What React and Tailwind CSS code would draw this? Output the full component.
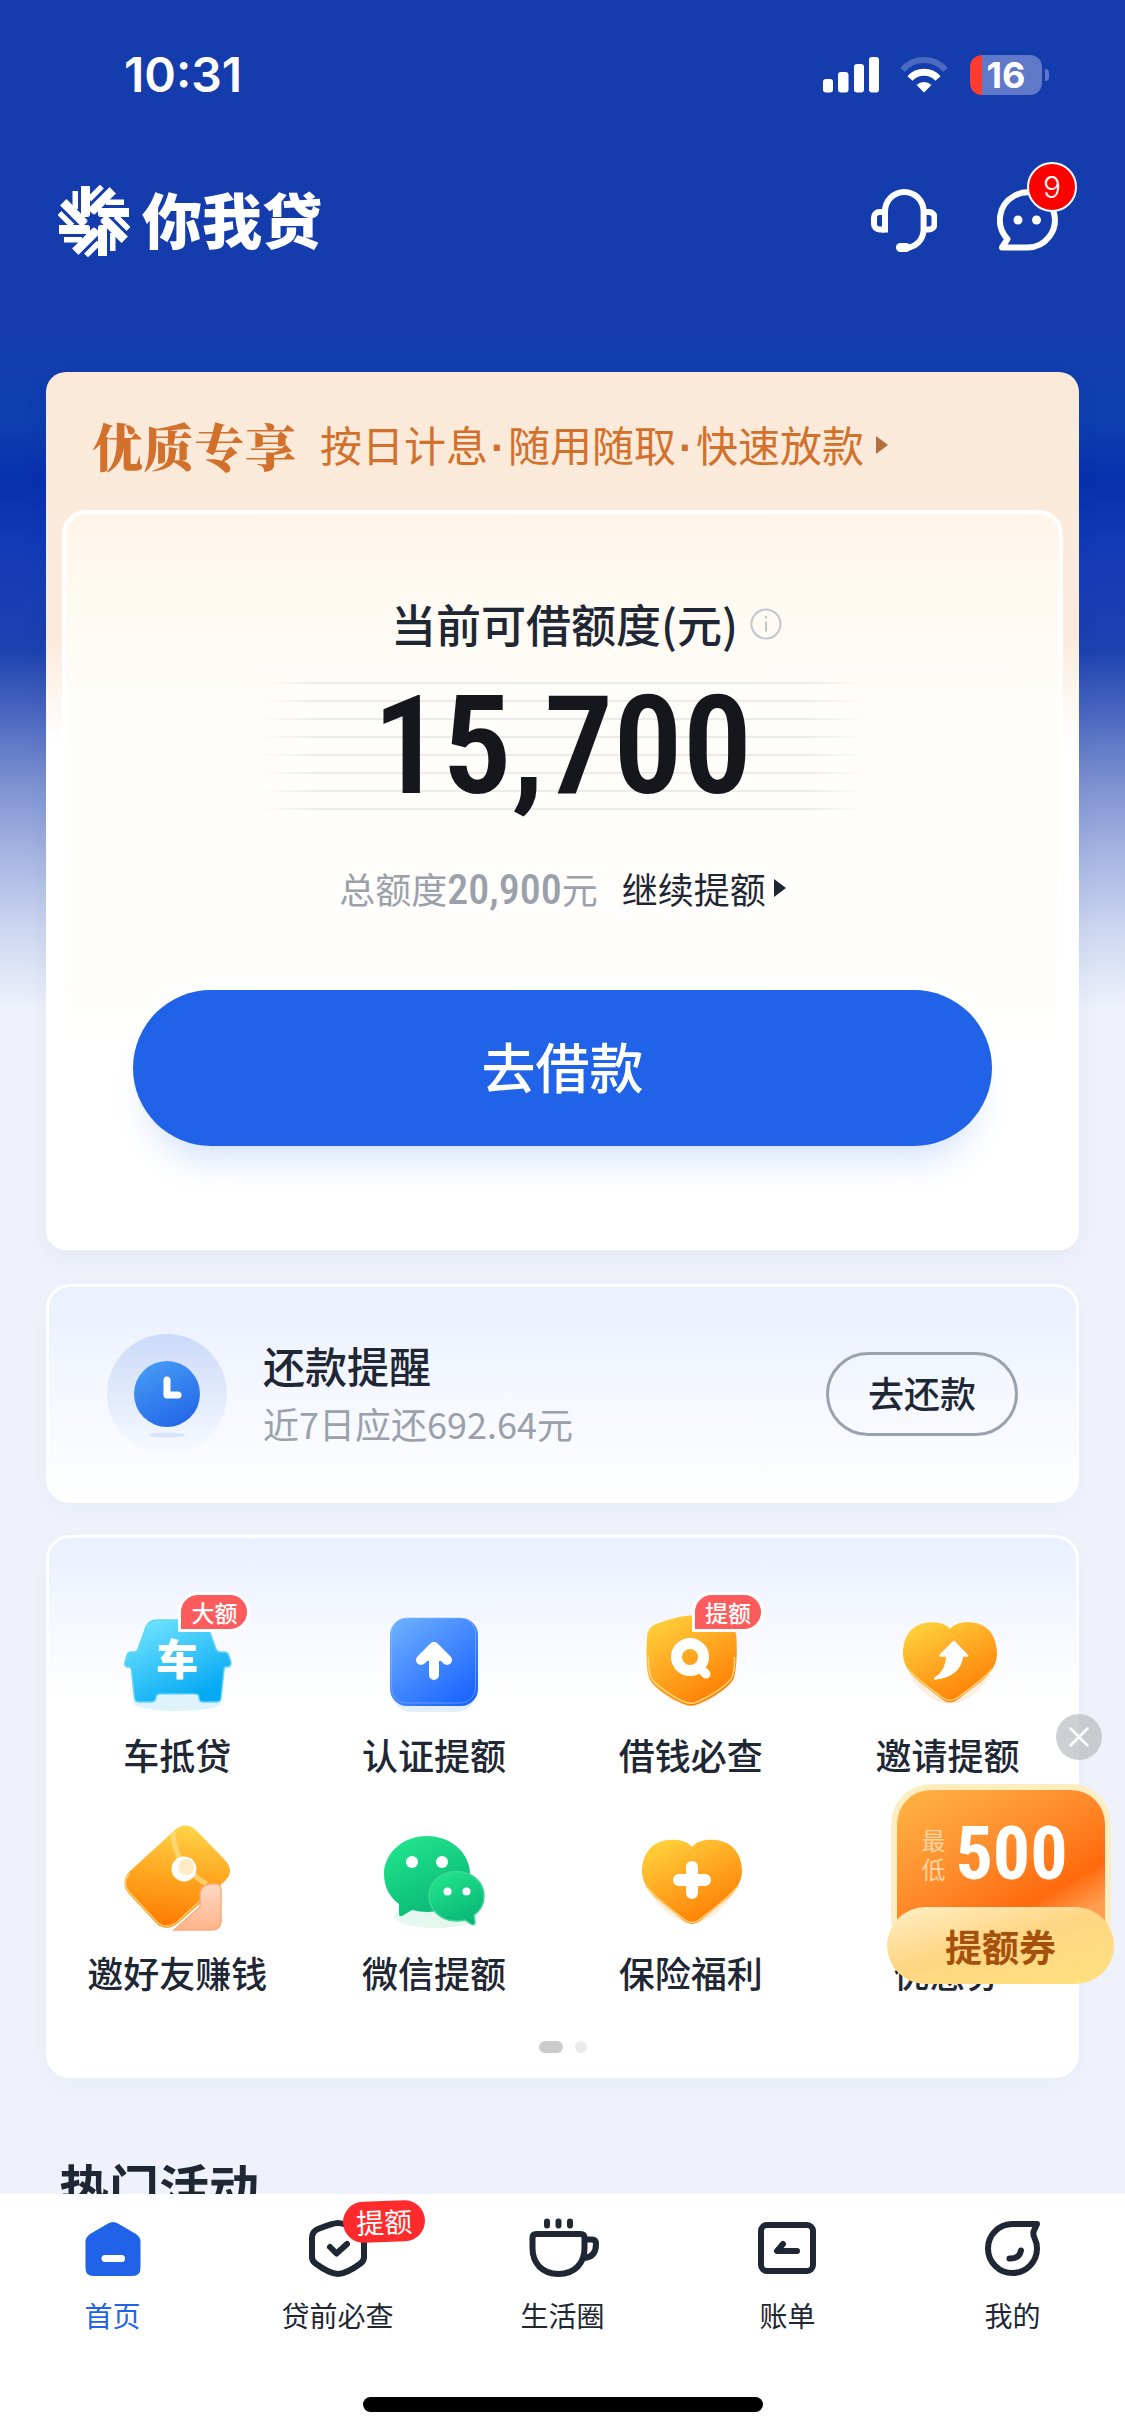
import React from "react";

const CarIcon = () => (
  <svg viewBox="0 0 120 120" className="size-[120px]" aria-hidden="true">
    <defs>
      <linearGradient id="car" x1="0" y1="0" x2="0.6" y2="1">
        <stop offset="0" stopColor="#7ae9ff" />
        <stop offset="1" stopColor="#05a9f4" />
      </linearGradient>
    </defs>
    <ellipse cx="60" cy="101" rx="44" ry="8" fill="#dff3fd" />
    <path
      d="M40 18 H80 Q88 18 91 25 L99 47 Q100 50 103 50 H107 Q111 50 112 54 L114 60 Q114 65 110 65 H108 Q107 66 107 68 L104 96 Q104 100 99 100 H86 Q82 100 82 96 Q82 92 78 92 H43 Q39 92 39 96 Q38 100 34 100 H22 Q18 100 17.500 96 L14.500 68 Q14 65 12 65 H10 Q7 64 8 60 L10 53 Q11 50 15 50 H18 Q20 50 21 47 L29 25 Q32 18 40 18Z"
      fill="url(#car)"
      stroke="#63d5fb"
      strokeWidth="1.500"
    />
    <text
      x="60"
      y="73"
      textAnchor="middle"
      className="fill-white font-['Noto_Sans_CJK_SC',sans-serif] text-[42px] font-black"
    >
      车
    </text>
  </svg>
);

const VerifyIcon = () => (
  <svg viewBox="0 0 120 120" className="size-[120px]" aria-hidden="true">
    <defs>
      <linearGradient id="verify" x1="0" y1="0" x2="0.8" y2="1">
        <stop offset="0" stopColor="#6fb2ff" />
        <stop offset="1" stopColor="#1c64ff" />
      </linearGradient>
    </defs>
    <rect x="18" y="28" width="84" height="82" rx="20" fill="#e3eefd" />
    <rect x="16" y="16" width="88" height="88" rx="17" fill="url(#verify)" />
    <rect x="17.500" y="16" width="84" height="85" rx="15" fill="none" stroke="#83b8ff" strokeOpacity="0.6" />
    <path
      d="M60 45 V73 M47 58 L60 45 L73 58 M54 54 H66"
      fill="none"
      stroke="#fff"
      strokeWidth="10"
      strokeLinecap="round"
      strokeLinejoin="round"
    />
  </svg>
);

const OrangeDefs = ({ id }) => (
  <defs>
    <linearGradient id={id} x1="0.100" y1="0" x2="0.700" y2="1">
      <stop offset="0" stopColor="#ffd43c" />
      <stop offset="0.550" stopColor="#ffa31f" />
      <stop offset="1" stopColor="#ff7c00" />
    </linearGradient>
  </defs>
);

const SearchShieldIcon = () => (
  <svg viewBox="0 0 120 120" className="size-[120px]" aria-hidden="true">
    <OrangeDefs id="shield" />
    <path d="M20 78 Q60 130 100 78Z" fill="#fdeedd" />
    <path
      d="M60 13.500 C73 14 85 18 95 21.500 Q105 25 105.500 35 C106 50 106 62 103.500 74 C102 84 80 97 66 102.500 Q60 105 54 102.500 C40 97 19 84 17.500 74 C15 62 15.500 50 16 35 Q16.500 25 26 21.500 C37 18 48 14 60 13.500Z"
      fill="url(#shield)"
    />
    <path
      d="M17.500 55 Q17 66 19.500 74 C22 82 42 95 54 100 Q60 102.500 66 100 C78 95 99 82 101.500 74 Q104 66 103.500 55"
      fill="none"
      stroke="#ffd479"
      strokeWidth="1.500"
    />
    <circle cx="59" cy="55" r="13.500" fill="none" stroke="#fff" strokeWidth="11" />
    <path d="M68 65 L75 72" stroke="#fff" strokeWidth="9" strokeLinecap="round" />
  </svg>
);

const HeartArrowIcon = () => (
  <svg viewBox="0 0 120 120" className="size-[120px]" aria-hidden="true">
    <OrangeDefs id="heartArrow" />
    <path d="M20 72 Q62 132 104 72Z" fill="#fdf0e2" />
    <path
      d="M62 27 C68 20 78 20 84 20.500 C100 22 109 34 109 52 C109 64 100 74 90 82 L69 98 Q62 103 55 98 L34 82 C24 74 15 64 15 52 C15 34 24 22 40 20.500 C46 20 56 20 62 27Z"
      fill="url(#heartArrow)"
    />
    <path d="M20 67 Q28 77 55 96 Q62 101 69 96 Q96 77 104 67" fill="none" stroke="#ffd479" strokeWidth="1.500" />
    <path
      d="M66 40 L79 53.500 H74 C73 66 64 75 47 76.500 C55 72 59 65 59.500 53.500 H52.500Z"
      fill="#fff"
      stroke="#fff"
      strokeWidth="2.500"
      strokeLinejoin="round"
    />
  </svg>
);

const EnvelopeIcon = () => (
  <svg viewBox="0 0 120 120" className="size-[120px]" aria-hidden="true">
    <defs>
      <linearGradient id="envelope" x1="0.500" y1="0" x2="0.400" y2="1">
        <stop offset="0" stopColor="#ffd447" />
        <stop offset="0.500" stopColor="#ffa51f" />
        <stop offset="1" stopColor="#ff7a00" />
      </linearGradient>
      <linearGradient id="letter" x1="0.500" y1="0" x2="0.500" y2="1">
        <stop offset="0" stopColor="#fdd8c4" />
        <stop offset="1" stopColor="#ffb58a" />
      </linearGradient>
    </defs>
    <path
      d="M58 10 Q68 1 79 10 L108 40 Q118 51 108 61 L61 103 Q50 112 40 104 L12 74 Q3 63 12 52Z"
      fill="url(#envelope)"
    />
    <path d="M13 53 Q4 63 13 73 L41 103 Q50 110 60 102 L83 81" fill="none" stroke="#ffcf6b" strokeWidth="1.500" />
    <path d="M56 12 Q57 34 69 47 T90 64" fill="none" stroke="#ffdf8e" strokeOpacity="0.700" strokeWidth="5" />
    <path
      d="M57 110 L83 87 V76 Q83 64 95 64 H98 Q104 64 104 70 V100 Q104 110 94 110Z"
      fill="url(#letter)"
      stroke="#ffa878"
      strokeWidth="1.500"
    />
    <circle cx="67" cy="49" r="12.500" fill="#fff" />
    <circle cx="69" cy="47" r="8" fill="#ffecc4" />
  </svg>
);

const WechatIcon = () => (
  <svg viewBox="0 0 120 120" className="size-[120px]" aria-hidden="true">
    <defs>
      <linearGradient id="wechat" x1="0.200" y1="0" x2="0.700" y2="1">
        <stop offset="0" stopColor="#22e58c" />
        <stop offset="1" stopColor="#08b575" />
      </linearGradient>
    </defs>
    <ellipse cx="62" cy="96" rx="42" ry="12" fill="#e4f8ef" />
    <path
      d="M53 16 C77 16 96 33 96 54 C96 76 77 92 53 92 Q46 92 38 90 L28 96 Q25 97 25 94 L25 84 C15 77 10 66 10 54 C10 33 29 16 53 16Z"
      fill="url(#wechat)"
    />
    <path
      d="M82.500 51.500 C98 51.500 110 62 110 76 C110 84 106 91 100 95 L101 103 Q100 106 97 104 L91 100 Q87 101 82.500 101 C67 101 55 90 55 76 C55 62 67 51.500 82.500 51.500Z"
      fill="url(#wechat)"
      stroke="#3fd799"
      strokeWidth="1.500"
    />
    <g fill="#fff">
      <circle cx="38" cy="42" r="6" />
      <circle cx="68" cy="42" r="6" />
      <circle cx="73.500" cy="71.500" r="4" />
      <circle cx="92.500" cy="71.500" r="4" />
    </g>
  </svg>
);

const HeartPlusIcon = () => (
  <svg viewBox="0 0 120 120" className="size-[120px]" aria-hidden="true">
    <OrangeDefs id="heartPlus" />
    <path d="M18 72 Q61 134 104 72Z" fill="#fdf0e2" />
    <path
      d="M61 27 C67 20 77 19.500 84 20 C101 21 111 34 111 51 C111 62 104 72 96 79 L69 101 Q61 107 53 101 L26 79 C18 72 11 62 11 51 C11 34 21 21 38 20 C45 19.500 55 20 61 27Z"
      fill="url(#heartPlus)"
    />
    <path d="M15 66 Q24 78 54 100 Q61 105 68 100 Q98 78 107 66" fill="none" stroke="#ffd479" strokeWidth="1.500" />
    <path d="M61 47 V73 M48 60 H74" stroke="#fff" strokeWidth="12" strokeLinecap="round" />
  </svg>
);

const TicketIcon = () => (
  <svg viewBox="0 0 120 120" className="size-[120px]" aria-hidden="true">
    <OrangeDefs id="ticket" />
    <rect x="24" y="30" width="76" height="60" rx="12" fill="url(#ticket)" />
  </svg>
);

const services = [
  { label: "车抵贷", icon: <CarIcon />, tag: "大额" },
  { label: "认证提额", icon: <VerifyIcon /> },
  { label: "借钱必查", icon: <SearchShieldIcon />, tag: "提额" },
  { label: "邀请提额", icon: <HeartArrowIcon /> },
  { label: "邀好友赚钱", icon: <EnvelopeIcon /> },
  { label: "微信提额", icon: <WechatIcon /> },
  { label: "保险福利", icon: <HeartPlusIcon /> },
  { label: "优惠券", icon: <TicketIcon /> },
];

const tabs = [
  {
    label: "首页",
    active: true,
    icon: (
      <>
        <path
          d="M31 10.500 Q36 7.500 41 10.500 L59 21 Q63.500 24 63.500 29 V55 Q63.500 63 55.500 63 H16.500 Q8.500 63 8.500 55 V29 Q8.500 24 13 21Z"
          fill="#2063e8"
          stroke="none"
        />
        <path d="M28 45.500 H44.500" stroke="#fff" strokeWidth="7" />
      </>
    ),
  },
  {
    label: "贷前必查",
    tag: "提额",
    icon: (
      <>
        <path d="M36 10 Q31 10 16 16 Q10 18.500 10 25 V44 Q10 48 13.500 50.500 Q28 61 36 61 Q44 61 58.500 50.500 Q62 48 62 44 V25 Q62 18.500 56 16 Q41 10 36 10Z" />
        <path d="M28 34 L34.500 40.500 L45 31" />
      </>
    ),
  },
  {
    label: "生活圈",
    icon: (
      <>
        <path d="M9.500 21 H53.500 Q57.500 21 57.500 25 V35 C57.500 50 48 61 31.500 61 C15 61 5.500 50 5.500 35 V25 Q5.500 21 9.500 21Z" />
        <path d="M58 26.500 H65 Q69 26.500 69 31 C69 40 65 44.500 57 45" />
        <path d="M20 8.500 V12.500 M31.500 8.500 V12.500 M43 8.500 V12.500" />
      </>
    ),
  },
  {
    label: "账单",
    icon: (
      <>
        <rect x="9" y="12" width="52" height="46" rx="6" />
        <path d="M31 31 L25 38 H45" />
      </>
    ),
  },
  {
    label: "我的",
    icon: (
      <>
        <path d="M35.500 11 H60 L57 17.500 Q55.500 21 57.500 25 Q60 30 60 35.500 A24.500 24.500 0 1 1 35.500 11Z" />
        <path d="M32.500 45.500 Q42 46 44 37.500" />
      </>
    ),
  },
];

const arms = [0, 45, 90, 135, 180, 225, 270, 315];

const StatusBar = () => (
  <div className="flex h-[150px] items-center justify-between pr-[76px] pl-[124px] text-white">
    <span className="font-['Inter',sans-serif] text-5xl font-semibold">10:31</span>
    <div className="flex items-center">
      <svg viewBox="0 0 57 36" className="h-9 w-[57px]" fill="#fff" aria-hidden="true">
        <rect x="0" y="22" width="10" height="13.500" rx="3" />
        <rect x="15" y="15" width="10.500" height="20.500" rx="3" />
        <rect x="31" y="7" width="10" height="28.500" rx="3" />
        <rect x="46" y="0" width="10" height="35.500" rx="3" />
      </svg>
      <svg viewBox="0 0 48 36" className="ml-5 h-9 w-12" fill="none" strokeWidth="6" aria-hidden="true">
        <path d="M2.500 13 A28 28 0 0 1 45.500 13" stroke="#4c69c0" />
        <path d="M10 21.500 A19 19 0 0 1 38 21.500" stroke="#fff" strokeWidth="7" />
        <path d="M16.500 28 A11 11 0 0 1 31.500 28 L24 35.500Z" fill="#fff" />
      </svg>
      <div className="ml-[22px] flex h-10 w-[72px] items-center justify-center rounded-xl bg-[linear-gradient(90deg,#ff3b30_12px,#5f79c8_12px)]">
        <span className="font-['Inter',sans-serif] text-4xl font-bold">16</span>
      </div>
      <div className="ml-[3px] h-3 w-1 rounded-r-full bg-[#5f79c8]" />
    </div>
  </div>
);

const Header = () => (
  <header className="flex h-[142px] items-center justify-between pr-[66px] pl-[58px] text-white">
    <a href="#home" className="flex items-center gap-3">
      <svg viewBox="-36 -36 72 72" className="size-[72px]" aria-hidden="true">
        {arms.map((a) => (
          <g key={a} transform={`rotate(${a})`} fill="#fff">
            <path d="M-13 -35 H-4 V-4 H-13Z" />
            <path d="M-21.500 -30 H-16 V-12 H-21.500Z" />
          </g>
        ))}
        {arms.map((a) => (
          <path key={a} transform={`rotate(${a})`} d="M-14.500 -36 V-20" stroke="#143cad" strokeWidth="2.600" />
        ))}
        {arms.map((a) => (
          <path key={a} transform={`rotate(${a})`} d="M0 -8 L3 0 H-3Z" fill="#143cad" />
        ))}
      </svg>
      <span className="pb-1.5 text-[60px] leading-none font-black">你我贷</span>
    </a>
    <div className="flex items-center gap-[60px]">
      <button type="button" aria-label="客服">
        <svg viewBox="0 0 66 64" className="h-16 w-[66px]" fill="none" stroke="#fff" strokeWidth="6" aria-hidden="true">
          <path d="M14 40.500 H8.500 a5.500 5.500 0 0 1 -5.500 -5.500 V28.500 a5.500 5.500 0 0 1 5.500 -5.500 H14" />
          <path d="M52.500 40.500 H58 a5.500 5.500 0 0 0 5.500 -5.500 V28.500 a5.500 5.500 0 0 0 -5.500 -5.500 H52.500" />
          <path d="M14 43.500 V22.500 a19.300 19.500 0 0 1 38.600 0 V40 C52.600 51 45 58 35 59" />
          <path d="M29.500 58.500 H35" strokeWidth="9" strokeLinecap="round" />
        </svg>
      </button>
      <button type="button" aria-label="消息" className="relative">
        <svg viewBox="0 0 62 64" className="h-16 w-[62px]" fill="none" stroke="#fff" strokeWidth="6" strokeLinejoin="round" aria-hidden="true">
          <path d="M5 58.500 L10.500 50 A27.500 27.500 0 1 1 30.500 58.500Z" />
          <circle cx="21" cy="31" r="4.500" fill="#fff" stroke="none" />
          <circle cx="39.500" cy="31" r="4.500" fill="#fff" stroke="none" />
        </svg>
        <span className="absolute -top-[27px] -right-[18px] flex size-[50px] items-center justify-center rounded-full border-2 border-white bg-[#fe0000] font-['Inter',sans-serif] text-3xl font-light">
          9
        </span>
      </button>
    </div>
  </header>
);

const Dot = () => <span className="mx-[3px] font-['Liberation_Sans',sans-serif] font-bold">·</span>;

const LoanCard = () => (
  <section className="mx-[46px] mt-20 rounded-[20px] bg-[linear-gradient(180deg,#fbe9d9_0px,#fcebdd_270px,#ffffff_371px)] shadow-[0_8px_24px_rgba(30,50,100,0.05)]">
    <a href="#offer" className="flex h-[138px] items-center pt-2 pl-[46px] text-[#d2712c]">
      <span className="font-['Noto_Serif_CJK_SC','Noto_Sans_CJK_SC',serif] text-[51px] font-black">优质专享</span>
      <span className="ml-6 text-[42px]">
        按日计息
        <Dot />
        随用随取
        <Dot />
        快速放款
      </span>
      <svg viewBox="0 0 12 18" className="ml-3 h-[18px] w-3" fill="#b5703f" aria-hidden="true">
        <path d="M0 0 L12 9 L0 18Z" />
      </svg>
    </a>
    <div className="mx-4 flex flex-col items-center rounded-t-3xl border-4 border-b-0 border-white bg-[linear-gradient(180deg,#fff5ea_0px,#fffaf2_90px,#fffdf9_180px,#fffefc_420px,#ffffff_560px)] px-[67px] pt-20 pb-[104px]">
      <div className="flex items-center gap-3 pl-12">
        <h2 className="text-[45px] leading-[60px] font-medium text-[#1e2733]">当前可借额度(元)</h2>
        <svg viewBox="0 0 32 32" className="size-8" fill="none" stroke="#c3c6cb" strokeWidth="2" aria-hidden="true">
          <circle cx="16" cy="16" r="14.500" />
          <path d="M16 13.500 V23.500 M16 8 V10.500" />
        </svg>
      </div>
      <div className="relative mt-7 flex h-32 w-[606px] items-center justify-center">
        <div className="absolute inset-0 flex flex-col justify-between mask-[linear-gradient(90deg,transparent,#000_10%,#000_90%,transparent)]">
          {arms.map((a) => (
            <span key={a} className="h-[2px] bg-[#ecebea]" />
          ))}
        </div>
        <strong className="relative font-['Roboto_Condensed','Liberation_Sans_Narrow','Roboto',sans-serif] text-[138px] leading-none font-semibold text-[#15171c]">
          15,700
        </strong>
      </div>
      <div className="mt-[54px] flex items-center text-4xl leading-[48px]">
        <span className="text-[#9aa1ab]">
          总额度
          <span className="font-['Roboto_Condensed','Liberation_Sans_Narrow','Roboto',sans-serif] text-[42px] leading-none font-medium">20,900</span>元
        </span>
        <a href="#raise" className="ml-6 flex items-center gap-2 text-[#1e2733]">
          继续提额
          <svg viewBox="0 0 12 18" className="h-[18px] w-3" fill="#1e2733" aria-hidden="true">
            <path d="M0 0 L12 9 L0 18Z" />
          </svg>
        </a>
      </div>
      <button
        type="button"
        className="mt-[78px] h-[156px] w-full rounded-full bg-[#2063e8] pb-1.5 text-[54px] font-medium text-white shadow-[0_28px_36px_-16px_rgba(32,99,232,0.2)]"
      >
        去借款
      </button>
    </div>
  </section>
);

const RepayCard = () => (
  <section className="mx-[46px] mt-[34px] flex h-[219px] items-center rounded-3xl border-[3px] border-white bg-linear-to-b from-[#eaf0ff] to-white pr-[58px] pl-[58px] shadow-[0_8px_24px_rgba(30,50,100,0.03)]">
    <svg viewBox="0 0 120 120" className="size-[120px]" aria-hidden="true">
      <defs>
        <linearGradient id="halo" x1="0" y1="0" x2="0" y2="1">
          <stop offset="0" stopColor="#cbdaf8" />
          <stop offset="1" stopColor="#f8faff" />
        </linearGradient>
        <linearGradient id="clock" x1="0.200" y1="0" x2="0.700" y2="1">
          <stop offset="0" stopColor="#459bf5" />
          <stop offset="1" stopColor="#2467e8" />
        </linearGradient>
      </defs>
      <circle cx="60" cy="60" r="60" fill="url(#halo)" />
      <ellipse cx="60" cy="101" rx="18" ry="2.500" fill="#d9e4fb" />
      <circle cx="60" cy="60" r="33" fill="url(#clock)" />
      <path d="M60 46 V61 H71" fill="none" stroke="#fff" strokeWidth="7" strokeLinecap="round" strokeLinejoin="round" />
    </svg>
    <div className="ml-9 flex-1">
      <h3 className="text-[42px] leading-[58px] font-medium text-[#1e2733]">还款提醒</h3>
      <p className="text-4xl leading-[58px] text-[#9aa1ab]">近7日应还692.64元</p>
    </div>
    <button type="button" className="h-[84px] w-48 rounded-full border-[3px] border-[#9aa2ae] pb-1 text-4xl font-medium text-[#1e2733]">
      去还款
    </button>
  </section>
);

const ServiceGrid = () => (
  <section className="mx-[46px] mt-8 rounded-3xl border-[3px] border-white bg-[linear-gradient(180deg,#eaf0ff_0px,#ffffff_160px)] pt-16 pb-[22px] shadow-[0_8px_24px_rgba(30,50,100,0.03)]">
    <div className="grid grid-cols-4 gap-y-[42px]">
      {services.map((s) => (
        <a key={s.label} href="#service" className="flex flex-col items-center gap-2">
          <span className="relative">
            {s.icon}
            {s.tag && (
              <span className="absolute -top-2.5 left-[61px] rounded-full rounded-bl-none border-[3px] border-white bg-[#fe5b5c] px-2.5 text-[23px] leading-[34px] font-medium whitespace-nowrap text-white">
                {s.tag}
              </span>
            )}
          </span>
          <span className="text-4xl leading-[48px] font-medium text-[#1e2733]">{s.label}</span>
        </a>
      ))}
    </div>
    <div className="mt-[45px] flex justify-center gap-3">
      <span className="h-3 w-6 rounded-full bg-[#cbcbcb]" />
      <span className="size-3 rounded-full bg-[#ebebeb]" />
    </div>
  </section>
);

const CouponFloat = () => (
  <aside className="absolute right-[11px] bottom-[451px] flex w-[227px] flex-col items-end">
    <button type="button" aria-label="关闭" className="mr-3 mb-6 rounded-full bg-[#b4b5b9]/65">
      <svg viewBox="0 0 46 46" className="size-[46px]" stroke="#fff" strokeWidth="2.500" strokeLinecap="round" aria-hidden="true">
        <path d="M14.500 14.500 L31.500 31.500 M31.500 14.500 L14.500 31.500" />
      </svg>
    </button>
    <button type="button" className="flex w-full flex-col items-center">
      <span className="flex h-[141px] w-[220px] items-center justify-center gap-2.5 rounded-t-[40px] border-[6px] border-b-0 border-[#fdeec2] bg-[linear-gradient(150deg,#ffac40_10%,#ff8c2c_45%,#ff6a0d_75%,#ff9c50_90%)] pr-3 pb-2 text-white">
        <span className="w-6 text-2xl leading-[29px] text-[#ffd5a6]">最低</span>
        <strong className="font-['Roboto_Condensed','Liberation_Sans_Narrow','Roboto',sans-serif] text-[74px] leading-none font-bold">500</strong>
      </span>
      <span className="-mt-[18px] h-[77px] w-full rounded-full bg-[linear-gradient(165deg,#ffefc6,#ffd684_45%,#ffe07e)] text-[37px] leading-[79px] font-bold text-[#a5500d]">
        提额券
      </span>
    </button>
  </aside>
);

const TabBar = () => (
  <nav className="relative shrink-0 bg-white pt-[19px] pb-[23px]">
    <div className="grid grid-cols-5">
      {tabs.map((t) => (
        <a
          key={t.label}
          href="#tab"
          className={`flex flex-col items-center gap-2.5 text-[28px] leading-10 ${t.active ? "text-[#2063e8]" : "text-[#1e2733]"}`}
        >
          <span className="relative">
            <svg
              viewBox="0 0 72 72"
              className="size-[72px]"
              fill="none"
              stroke="#1e2733"
              strokeWidth="6"
              strokeLinecap="round"
              strokeLinejoin="round"
              aria-hidden="true"
            >
              {t.icon}
            </svg>
            {t.tag && (
              <span className="absolute -top-3 left-[41px] w-[82px] -rotate-2 rounded-full bg-[#ff2a2b] text-center text-[28px] leading-[41px] text-white">
                {t.tag}
              </span>
            )}
          </span>
          {t.label}
        </a>
      ))}
    </div>
    <div className="mx-auto mt-[62px] h-[15px] w-[400px] rounded-full bg-black" />
  </nav>
);

const App = () => {
  return (
    <div className="relative flex h-screen flex-col overflow-hidden bg-[linear-gradient(180deg,#143cad_0px,#143cad_330px,#0e3fae_420px,#0830ae_480px,#133ab6_550px,#1c42b0_650px,#4a66c0_712px,#7f93d2_786px,#a8b7e3_860px,#cdd7f0_930px,#eff2fb_1010px)] font-['Noto_Sans_CJK_SC',sans-serif]">
      <main className="min-h-0 flex-1 overflow-hidden">
        <StatusBar />
        <Header />
        <LoanCard />
        <RepayCard />
        <ServiceGrid />
        <h2 className="mt-[77px] ml-[59px] text-[50px] leading-[60px] font-bold text-[#1e2733]">热门活动</h2>
      </main>
      <CouponFloat />
      <TabBar />
    </div>
  );
};

export default App;
